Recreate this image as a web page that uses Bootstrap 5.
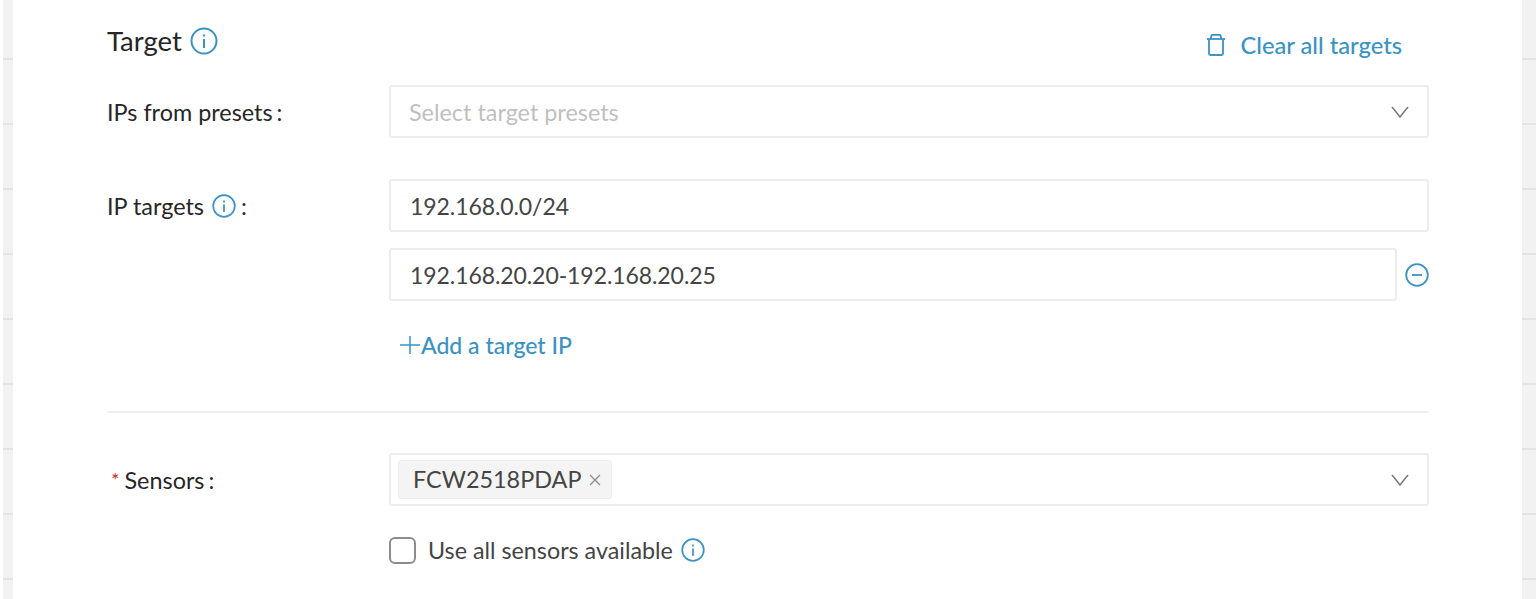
<!DOCTYPE html>
<html lang="en">
<head>
    <meta charset="UTF-8">
    <meta name="viewport" content="width=device-width, initial-scale=1.0">
    <title>Target</title>
    <link href="https://cdn.jsdelivr.net/npm/bootstrap@5.3.2/dist/css/bootstrap.min.css" rel="stylesheet">
    <style>
        html, body { height: 100%; }
        body {
            margin: 0;
            overflow: hidden;
            font-family: "Lato", "Liberation Sans", sans-serif;
            color: #262626;
            background-color: #f2f2f2;
            background-image:
                linear-gradient(to right, #fff 3px, transparent 3px),
                repeating-linear-gradient(to bottom, transparent 0, transparent 58px, #e4e4e4 58px, #e4e4e4 60px, transparent 60px, transparent 65px);
        }
        /* white sheet between the two grey strips */
        .sheet {
            margin: 0 14px 0 13px;
            height: 599px;
            background: #fff;
            padding: 0 93px 0 94px;
        }
        .title-row { height: 85px; }
        .title-text { font-size: 27.5px; line-height: 34px; margin-top: 24px; }
        .title-info { margin-top: 27px; }
        .clear-link { color: #3a93c3; font-size: 23.7px; text-decoration: none; margin-top: 30px; margin-right: 27px; line-height: 30px; font-weight: 500; gap: 15px; }
        .label-col { width: 282px; flex: none; font-size: 23.4px; line-height: 30px; padding-top: 12px; }
        .label-info { margin-top: 3px; }
        .colon-mark { margin-left: 4px; }
        .colon-tight { margin-left: -3px; }
        .tick { color: #3a93c3; }
        .fake-input {
            height: 53px;
            border: 2px solid #ececec;
            border-radius: 3px;
            font-size: 23.4px;
            color: #444;
            padding: 0 18px;
            background: #fff;
        }
        .fake-input.form-control { line-height: 49px; font-size: 23px; letter-spacing: -0.08px; padding-left: 19px; }
        .fake-input.form-control:focus { box-shadow: none; border-color: #ececec; }
        .hint { color: #bfbfbf; padding-top: 2px; }
        .row-gap { margin-bottom: 41px; }
        .add-link { color: #3a93c3; font-size: 23px; text-decoration: none; line-height: 30px; margin: 29px 0 0 10px; font-weight: 500; }
        .rule-line { border-top: 2px solid #efefef; margin: 51px 0 40px; }
        .req { color: #b5341c; font-size: 20px; line-height: 20px; margin-right: 5px; }
        .chip {
            background: #f4f4f4;
            border: 1px solid #eee;
            border-radius: 3px;
            height: 39px;
            padding: 0 10px 0 14px;
            font-size: 23.4px;
            line-height: 37px;
            margin-left: -11px;
            color: #444;
        }
        .sensor-box { padding-left: 18px; padding-right: 18px; margin-bottom: 29px; }
        .form-check .check-box {
            width: 27px;
            height: 27px;
            margin: 0;
            border: 2px solid #8c8c8c;
            border-radius: 6px;
            flex: none;
        }
        .check-text { font-size: 23.3px; color: #444; line-height: 30px; }
    </style>
</head>
<body>
    <div class="sheet">
        <!-- Heading -->
        <div class="d-flex justify-content-between title-row">
            <div class="d-flex align-items-start gap-2">
                <span class="title-text">Target</span>
                <svg class="tick title-info" width="28" height="28" viewBox="0 0 28 28" fill="none" stroke="currentColor"><circle cx="14" cy="14" r="12.5" stroke-width="2"/><path d="M14 12v9" stroke-width="2"/><path d="M14 7.5v2" stroke-width="2.2"/></svg>
            </div>
            <a href="#" class="clear-link d-flex align-items-center align-self-start">
                <svg width="20" height="22" viewBox="0 0 20 22" fill="none" stroke="currentColor" stroke-width="1.8" stroke-linejoin="round"><path d="M1 5h18"/><path d="M4.5 5l1-3.5a1 1 0 0 1 1-.6h7a1 1 0 0 1 1 .6l1 3.5"/><path d="M3 5v14.5a1.5 1.5 0 0 0 1.5 1.5h11a1.5 1.5 0 0 0 1.5-1.5V5"/></svg>
                Clear all targets
            </a>
        </div>

        <!-- Presets -->
        <div class="d-flex row-gap">
            <div class="label-col">IPs from presets<span class="colon-mark">:</span></div>
            <div class="fake-input flex-grow-1 d-flex align-items-center justify-content-between">
                <span class="hint">Select target presets</span>
                <svg width="18" height="12" viewBox="0 0 18 12" fill="none" stroke="#777" stroke-width="1.5"><path d="M1 1l8 10 8-10"/></svg>
            </div>
        </div>

        <!-- IP targets -->
        <div class="d-flex">
            <div class="label-col d-flex align-items-start gap-2">
                <span>IP targets</span>
                <svg class="tick label-info" width="24" height="24" viewBox="0 0 24 24" fill="none" stroke="currentColor"><circle cx="12" cy="12" r="10.8" stroke-width="1.7"/><path d="M12 10.5v7.5" stroke-width="1.7"/><path d="M12 6.5v2" stroke-width="1.8"/></svg>
                <span class="colon-tight">:</span>
            </div>
            <div class="flex-grow-1 d-flex flex-column">
                <input class="form-control fake-input" type="text" value="192.168.0.0/24">
                <div class="d-flex align-items-center gap-2 mt-3">
                    <input class="form-control fake-input flex-grow-1" type="text" value="192.168.20.20-192.168.20.25">
                    <svg class="tick flex-shrink-0" width="24" height="24" viewBox="0 0 24 24" fill="none" stroke="currentColor" stroke-width="1.8"><circle cx="12" cy="12" r="10.8"/><path d="M7 12h10"/></svg>
                </div>
                <a href="#" class="add-link d-flex align-items-center">
                    <svg width="22" height="22" viewBox="0 0 22 22" fill="none" stroke="currentColor" stroke-width="1.5"><path d="M11 2v18M1 11h20"/></svg>
                    Add a target IP
                </a>
            </div>
        </div>

        <div class="rule-line"></div>

        <!-- Sensors -->
        <div class="d-flex">
            <div class="label-col d-flex align-items-start">
                <span class="req ms-1 mt-1">*</span>
                <span>Sensors<span class="colon-mark">:</span></span>
            </div>
            <div class="fake-input sensor-box flex-grow-1 d-flex align-items-center justify-content-between">
                <span class="chip d-flex align-items-center gap-2">FCW2518PDAP
                    <svg width="12" height="12" viewBox="0 0 12 12" fill="none" stroke="#8c8c8c" stroke-width="1.3"><path d="M1 1l10 10M11 1L1 11"/></svg>
                </span>
                <svg width="18" height="12" viewBox="0 0 18 12" fill="none" stroke="#777" stroke-width="1.5"><path d="M1 1l8 10 8-10"/></svg>
            </div>
        </div>
        <div class="d-flex">
            <div class="label-col"></div>
            <div class="form-check d-flex align-items-center p-0 m-0 gap-2">
                <input class="form-check-input check-box" type="checkbox" id="useAll">
                <label class="check-text ms-1" for="useAll">Use all sensors available</label>
                <svg class="tick" width="24" height="24" viewBox="0 0 24 24" fill="none" stroke="currentColor"><circle cx="12" cy="12" r="10.8" stroke-width="1.7"/><path d="M12 10.5v7.5" stroke-width="1.7"/><path d="M12 6.5v2" stroke-width="1.8"/></svg>
            </div>
        </div>
    </div>
    <script src="https://cdn.jsdelivr.net/npm/bootstrap@5.3.2/dist/js/bootstrap.bundle.min.js"></script>
</body>
</html>
